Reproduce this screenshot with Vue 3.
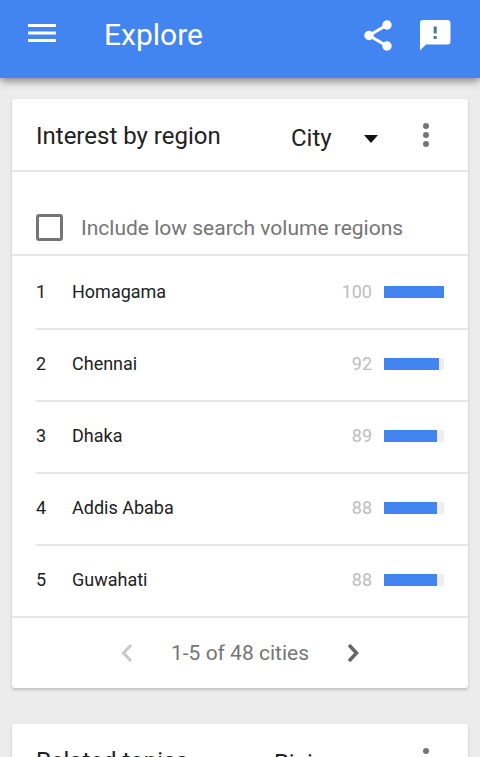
<script setup>
import { ref } from 'vue'

const region = ref('City')
const topic = ref('Rising')
const includeLow = ref(false)
const cities = [
  { name: 'Homagama', value: 100 },
  { name: 'Chennai', value: 92 },
  { name: 'Dhaka', value: 89 },
  { name: 'Addis Ababa', value: 88 },
  { name: 'Guwahati', value: 88 },
]
</script>

<template>
  <div class="app">
    <header class="bar">
      <button class="icon-button" type="button" aria-label="Menu">
        <svg width="36" height="36" viewBox="0 0 36 36"><path d="M4 7h28v3H4zM4 14.500h28v3H4zM4 22h28v3H4z" fill="#fff" /></svg>
      </button>
      <h1>Explore</h1>
      <button class="icon-button" type="button" aria-label="Share">
        <svg width="36" height="36" viewBox="0 0 36 36">
          <path d="M26 8L8 18.500L26 29" fill="none" stroke="#fff" stroke-width="3" />
          <circle cx="26" cy="8" r="4.700" fill="#fff" />
          <circle cx="8" cy="18.500" r="4.700" fill="#fff" />
          <circle cx="26" cy="29" r="4.700" fill="#fff" />
        </svg>
      </button>
      <button class="icon-button" type="button" aria-label="Send feedback">
        <svg width="36" height="36" viewBox="0 0 36 36">
          <path d="M6 3h24.500a3 3 0 0 1 3 3v18.500a3 3 0 0 1-3 3H9l-6 6V6a3 3 0 0 1 3-3z" fill="#fff" />
          <path d="M16.700 9.500h3v7h-3zM16.700 19h3v3h-3z" fill="#46799f" />
        </svg>
      </button>
    </header>

    <main class="content">
      <section class="card">
        <div class="card-head">
          <h2>Interest by region</h2>
          <div class="picker">
            <select v-model="region" class="city" aria-label="Region resolution">
              <option>City</option>
            </select>
            <svg class="caret" width="14" height="8" viewBox="0 0 14 8"><path d="M0 0h14L7 8z" fill="#111" /></svg>
          </div>
          <button class="more" type="button" aria-label="More options">
            <svg width="8" height="26" viewBox="0 0 8 26" fill="#757575"><circle cx="4" cy="4" r="3" /><circle cx="4" cy="13" r="3" /><circle cx="4" cy="22" r="3" /></svg>
          </button>
        </div>
        <label class="low-volume">
          <input v-model="includeLow" type="checkbox" />
          <span>Include low search volume regions</span>
        </label>
        <ol class="cities">
          <li v-for="(city, i) in cities" :key="city.name">
            <span class="rank">{{ i + 1 }}</span>
            <span class="name">{{ city.name }}</span>
            <span class="value">{{ city.value }}</span>
            <span class="track"><span class="fill" :style="{ width: city.value + '%' }"></span></span>
          </li>
        </ol>
        <nav class="pager" aria-label="Cities">
          <button type="button" aria-label="Previous" disabled>
            <svg width="12" height="20" viewBox="0 0 12 20"><path d="M10 2L2.500 10L10 18" fill="none" stroke="#c8c8c8" stroke-width="3" /></svg>
          </button>
          <span>1-5 of 48 cities</span>
          <button type="button" aria-label="Next">
            <svg width="12" height="20" viewBox="0 0 12 20"><path d="M2 2L9.500 10L2 18" fill="none" stroke="#666" stroke-width="3.500" /></svg>
          </button>
        </nav>
      </section>

      <section class="card">
        <div class="card-head">
          <h2>Related topics</h2>
          <div class="picker">
            <select v-model="topic" class="rising" aria-label="Topic order">
              <option>Rising</option>
            </select>
            <svg class="caret" width="14" height="8" viewBox="0 0 14 8"><path d="M0 0h14L7 8z" fill="#111" /></svg>
          </div>
          <button class="more" type="button" aria-label="More options">
            <svg width="8" height="26" viewBox="0 0 8 26" fill="#757575"><circle cx="4" cy="4" r="3" /><circle cx="4" cy="13" r="3" /><circle cx="4" cy="22" r="3" /></svg>
          </button>
        </div>
      </section>
    </main>
  </div>
</template>

<style>
body {
  margin: 0;
  background: #ececec;
}
</style>

<style scoped>
* {
  box-sizing: border-box;
}
.app {
  display: flex;
  flex-direction: column;
  height: 100vh;
  font-family: Roboto, "Liberation Sans", sans-serif;
  color: #212121;
  background: #ececec;
}
button,
select {
  padding: 0;
  border: 0;
  background: none;
  color: inherit;
  font-family: inherit;
}
svg {
  display: block;
}
h1,
h2 {
  margin: 0;
  font-weight: 400;
}
.bar {
  position: relative;
  z-index: 1;
  flex: none;
  display: flex;
  align-items: center;
  gap: 20px;
  height: 78px;
  padding: 0 27px 8px 24px;
  background: #4285f0;
  color: #fff;
  box-shadow: 0 3px 8px rgba(0, 0, 0, 0.45);
}
h1 {
  flex: 1;
  padding-left: 24px;
  font-size: 30px;
  line-height: 36px;
}
.content {
  flex: 1;
  min-height: 0;
  display: flex;
  flex-direction: column;
  gap: 36px;
  padding: 21px 12px 12px;
  overflow-y: auto;
  scrollbar-width: none;
}
.card {
  flex: none;
  background: #fff;
  border-radius: 3px;
  box-shadow: 0 2px 3px rgba(0, 0, 0, 0.18);
}
.card-head {
  display: flex;
  align-items: center;
  height: 73px;
  padding: 0 38px 0 24px;
  border-bottom: 2px solid #e6e6e6;
}
h2 {
  flex: 1;
  padding-top: 2px;
  font-size: 24px;
  line-height: 32px;
}
.picker {
  position: relative;
  padding-top: 6px;
}
.picker select {
  display: block;
  appearance: none;
  height: 32px;
  font-size: 24px;
  line-height: 32px;
}
.city {
  width: 87px;
}
.rising {
  width: 104px;
}
.caret {
  position: absolute;
  right: 0;
  top: 19px;
  pointer-events: none;
}
.more {
  margin-left: 44px;
}
.low-volume {
  display: flex;
  align-items: center;
  gap: 18px;
  height: 84px;
  padding: 29px 24px 0;
  border-bottom: 2px solid #e6e6e6;
  color: #757575;
  font-size: 21px;
  line-height: 28px;
}
.low-volume input {
  appearance: none;
  width: 27px;
  height: 27px;
  margin: 0;
  border: 3px solid #757575;
  border-radius: 3px;
}
.low-volume input:checked {
  background: #4285f0;
}
.cities {
  margin: 0;
  padding: 0 0 0 24px;
  list-style: none;
}
.cities li {
  display: flex;
  align-items: center;
  height: 72px;
  padding-right: 24px;
  font-size: 18px;
  line-height: 24px;
}
.cities li + li {
  box-shadow: inset 0 2px #e6e6e6;
}
.rank {
  width: 36px;
}
.name {
  flex: 1;
}
.value {
  margin-right: 12px;
  color: #bdbdbd;
}
.track {
  width: 60px;
  height: 12px;
  background: #eee;
}
.fill {
  display: block;
  height: 100%;
  background: #4285f0;
}
.pager {
  display: flex;
  align-items: center;
  justify-content: center;
  gap: 38px;
  height: 72px;
  border-top: 2px solid #e6e6e6;
  color: #757575;
  font-size: 21px;
  line-height: 28px;
}
</style>
